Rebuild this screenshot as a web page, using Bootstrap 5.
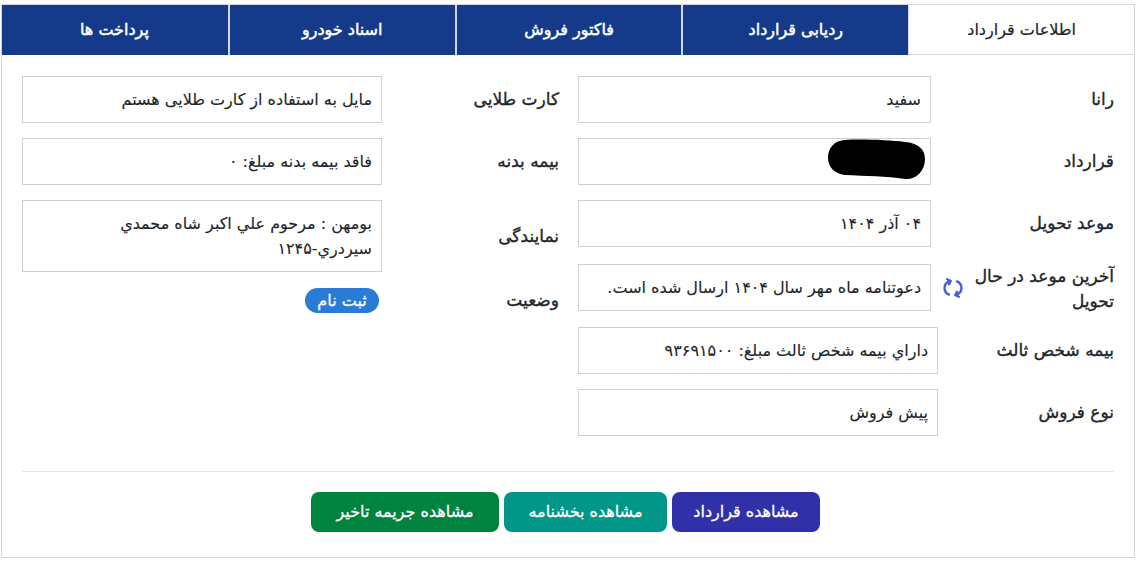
<!DOCTYPE html>
<html lang="fa" dir="rtl">
<head>
<meta charset="utf-8">
<title>اطلاعات قرارداد</title>
<link href="https://cdn.jsdelivr.net/npm/bootstrap@5.3.0/dist/css/bootstrap.min.css" rel="stylesheet">
<style>
html,body{background:#fff;height:100%;overflow:hidden}
body{font-family:"DejaVu Sans",sans-serif;color:#212529;font-size:16px}
.shell{margin:4px 1px 0;height:554px;border:1px solid #d5d7db;overflow:hidden}
.tabbar{height:50px;flex-wrap:nowrap;margin:0 -1px}
.tabbar .nav-link{height:50px;border-radius:0;background:#153a8a;color:#fff;font-size:16px;-webkit-text-stroke:.5px #fff;display:flex;align-items:center;justify-content:center;border-inline-end:2px solid #cfd8ea;padding:0}
.tabbar .nav-item:last-child .nav-link{border-inline-end:0}
.tabbar .nav-link.active{background:#fff;color:#212529;-webkit-text-stroke:.2px #212529;border:1px solid #d5d7db;border-top:0}
.info-grid{display:grid;grid-template-columns:536px 537px;column-gap:19px;padding:21px 20px 0}
.info-row{display:flex;align-items:center;margin-bottom:15px}
.info-row.gap-17{margin-bottom:17px}
.info-row.gap-16{margin-bottom:16px}
.info-label{width:176px;flex:none;font-size:17px;-webkit-text-stroke:.35px #212529;line-height:25px}
.info-label.side-label{width:177px}
.info-label-wrap{width:147px;height:47px}
.info-icon{width:29px;flex:none;display:flex;justify-content:center}
.info-value.form-control{width:360px;flex:none;min-height:47px;border:1px solid #ced0d5;border-radius:0;padding:10px 9px;color:#212529;font-size:16px;-webkit-text-stroke:.12px #212529;line-height:25px;background:#fff;display:flex;align-items:center;position:relative}
.info-value.narrow{width:353px;margin-inline-start:7px}
.blot{position:absolute;right:4px;top:0}
.status-pill{background:#2a7bd6;border-radius:13px;font-size:16px;font-weight:400;-webkit-text-stroke:.3px #fff;padding:0;width:74px;height:25px;line-height:25px;color:#fff;margin-inline-start:3px}
.rule{margin:35px 20px 20px;border-top:1px solid #e3e4e6;opacity:1}
.act-wrap{column-gap:5px;padding-inline-start:5px}
.act-btn{height:40px;font-size:16px;-webkit-text-stroke:.3px #fff;color:#fff;border:0;border-radius:8px;padding:0;display:flex;align-items:center;justify-content:center}
.act-btn:hover{color:#fff}
.act-a{background:#3030a8;width:148px}
.act-b{background:#009688;width:163px}
.act-c{background:#00833f;width:188px}
</style>
</head>
<body>
<div class="shell bg-white">
  <ul class="nav nav-justified tabbar pe-0">
    <li class="nav-item"><a class="nav-link active" href="#">اطلاعات قرارداد</a></li>
    <li class="nav-item"><a class="nav-link" href="#">ردیابی قرارداد</a></li>
    <li class="nav-item"><a class="nav-link" href="#">فاکتور فروش</a></li>
    <li class="nav-item"><a class="nav-link" href="#">اسناد خودرو</a></li>
    <li class="nav-item"><a class="nav-link" href="#">پرداخت ها</a></li>
  </ul>
  <div class="info-grid">
    <div>
      <div class="info-row"><div class="info-label">رانا</div><div class="form-control info-value narrow">سفید</div></div>
      <div class="info-row"><div class="info-label">قرارداد</div><div class="form-control info-value narrow"><svg class="blot" width="98" height="41" viewBox="0 0 98 41"><path d="M16 1C35 0 60 1 77 3C90 4 97 10 97 20C97 32 88 41 77 40C58 37 38 37 17 36C6 35 0 27 0 19C0 9 6 2 16 1Z" fill="#000"/></svg></div></div>
      <div class="info-row gap-17"><div class="info-label">موعد تحویل</div><div class="form-control info-value narrow">۰۴ آذر ۱۴۰۴</div></div>
      <div class="info-row gap-16"><div class="info-label info-label-wrap">آخرین موعد در حال تحویل</div><div class="info-icon"><svg width="20" height="20" viewBox="0 0 20 20" fill="none" stroke="#4a5fd0" stroke-width="2.4" stroke-linecap="round" stroke-linejoin="round"><path d="M7.5 3C3.8 3.9 1.5 6.7 1.5 10C1.5 13 3.2 15.4 6 16.6"/><path d="M4.2 1.2L7.5 3L6 6.2"/><path d="M12.5 17C16.2 16.1 18.5 13.3 18.5 10C18.5 7 16.8 4.6 14 3.4"/><path d="M15.8 18.8L12.5 17L14 13.8"/></svg></div><div class="form-control info-value narrow">دعوتنامه ماه مهر سال ۱۴۰۴ ارسال شده است.</div></div>
      <div class="info-row"><div class="info-label">بیمه شخص ثالث</div><div class="form-control info-value">داراي بیمه شخص ثالث مبلغ: ۹۳۶۹۱۵۰۰</div></div>
      <div class="info-row mb-0"><div class="info-label">نوع فروش</div><div class="form-control info-value">پیش فروش</div></div>
    </div>
    <div>
      <div class="info-row"><div class="info-label side-label">کارت طلایی</div><div class="form-control info-value">مایل به استفاده از کارت طلایی هستم</div></div>
      <div class="info-row"><div class="info-label side-label">بیمه بدنه</div><div class="form-control info-value">فاقد بیمه بدنه مبلغ: ۰</div></div>
      <div class="info-row gap-16"><div class="info-label side-label">نمایندگی</div><div class="form-control info-value">بومهن : مرحوم علي اكبر شاه محمدي سيردري-۱۲۴۵</div></div>
      <div class="info-row"><div class="info-label side-label">وضعیت</div><span class="badge status-pill">ثبت نام</span></div>
    </div>
  </div>
  <hr class="rule">
  <div class="d-flex justify-content-center act-wrap">
    <a class="btn act-btn act-a" href="#">مشاهده قرارداد</a>
    <a class="btn act-btn act-b" href="#">مشاهده بخشنامه</a>
    <a class="btn act-btn act-c" href="#">مشاهده جریمه تاخیر</a>
  </div>
</div>
<script src="https://cdn.jsdelivr.net/npm/bootstrap@5.3.0/dist/js/bootstrap.bundle.min.js"></script>
</body>
</html>
